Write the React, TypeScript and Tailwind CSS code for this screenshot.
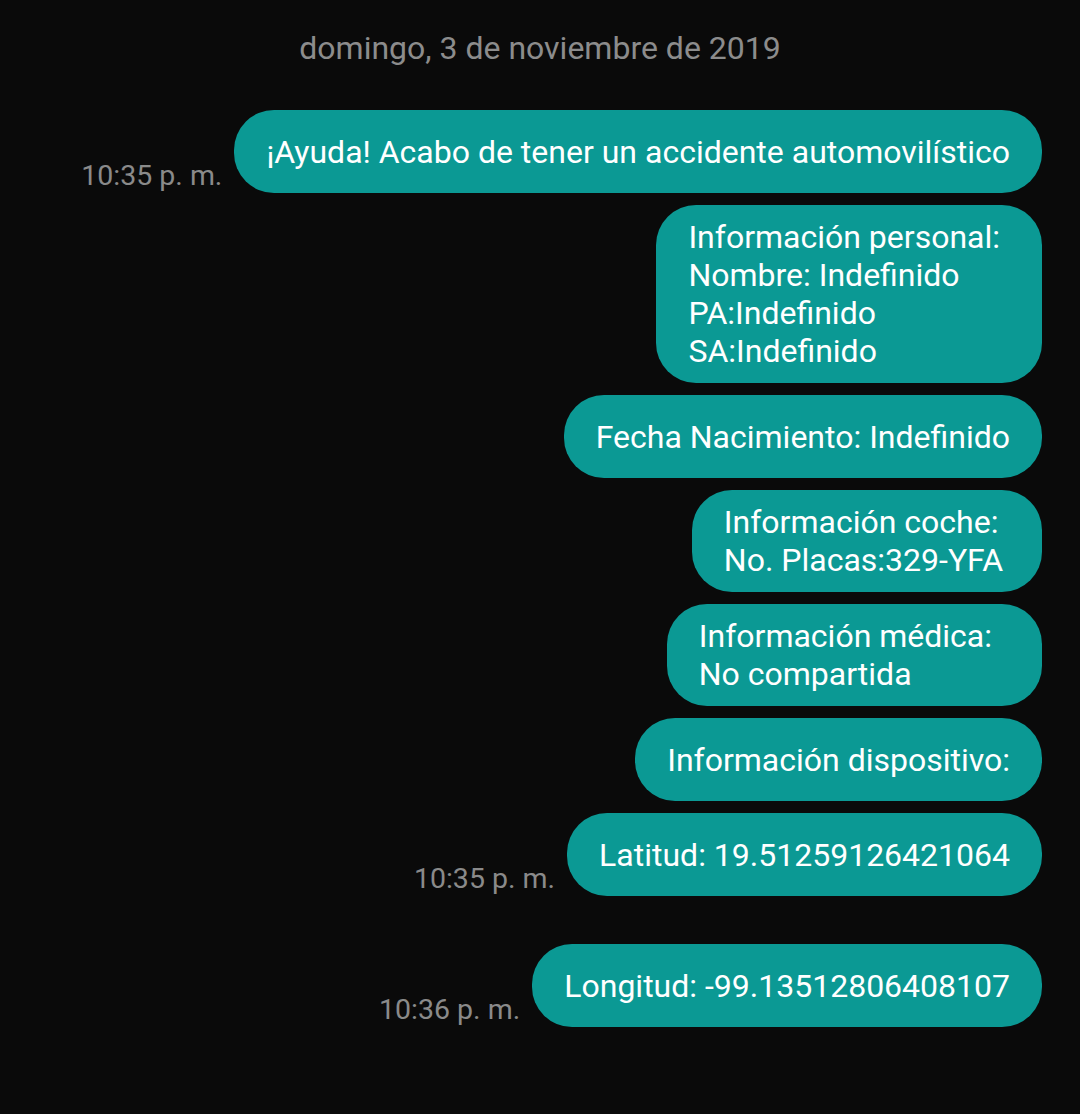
import React from 'react';

type Msg = {
  lines: string[];
  time?: string;
  gapTop?: string;
  padRight?: string;
};

const messages: Msg[] = [
  { lines: ['¡Ayuda! Acabo de tener un accidente automovilístico'], time: '10:35 p. m.', gapTop: 'mt-0' },
  { lines: ['Información personal:', 'Nombre: Indefinido', 'PA:Indefinido', 'SA:Indefinido'], padRight: 'pr-[42px]' },
  { lines: ['Fecha Nacimiento: Indefinido'] },
  { lines: ['Información coche:', 'No. Placas:329-YFA'], padRight: 'pr-[39px]' },
  { lines: ['Información médica:', 'No compartida'], padRight: 'pr-[50px]' },
  { lines: ['Información dispositivo:'] },
  { lines: ['Latitud: 19.51259126421064'], time: '10:35 p. m.' },
  { lines: ['Longitud: -99.13512806408107'], time: '10:36 p. m.', gapTop: 'mt-[48px]' },
];

const Bubble: React.FC<{ msg: Msg }> = ({ msg }) => (
  <div className={`flex items-end gap-3 ${msg.gapTop ?? 'mt-3'}`}>
    {msg.time && (
      <span className="text-[28.5px] leading-[32px] text-[#8a8a8a] mb-[1px] whitespace-nowrap">{msg.time}</span>
    )}
    <div
      className={`bg-[#0b9994] text-white rounded-[40px] min-h-[83px] pl-8 ${msg.padRight ?? 'pr-8'} py-[13px] flex flex-col justify-center text-[32px] leading-[38px]`}
    >
      {msg.lines.map((l, i) => (
        <div key={i} className="whitespace-nowrap">{l}</div>
      ))}
    </div>
  </div>
);

export default function App() {
  return (
    <div className="w-[1080px] h-[1114px] bg-[#0a0a0a] overflow-hidden" style={{ fontFamily: 'Roboto, sans-serif' }}>
      <div className="pt-[29px] text-center text-[32px] leading-[38px] text-[#8c8c8c]">
        domingo, 3 de noviembre de 2019
      </div>
      <div className="flex flex-col items-end pr-[38px] mt-[43px]">
        {messages.map((m, i) => (
          <Bubble key={i} msg={m} />
        ))}
      </div>
    </div>
  );
}
